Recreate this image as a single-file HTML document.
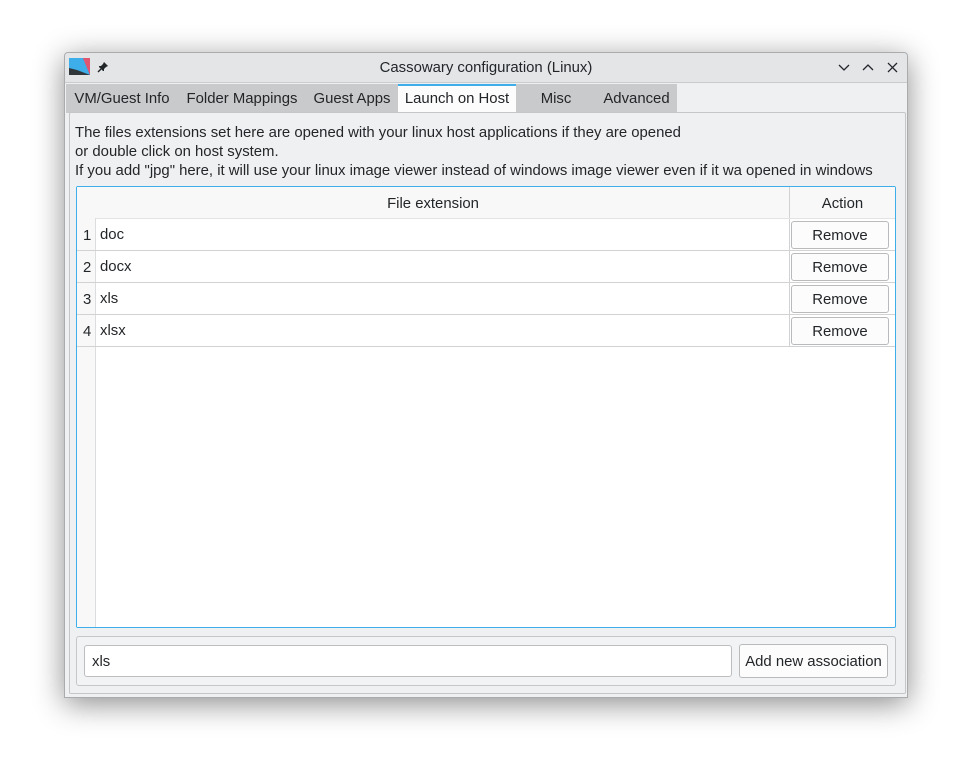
<!DOCTYPE html>
<html><head><style>
*{box-sizing:border-box;margin:0;padding:0}
body{width:972px;height:774px;background:#fff;font-family:"Liberation Sans",sans-serif;font-size:14.9px;color:#232629;position:relative;overflow:hidden}
.abs{position:absolute}
.win{left:64px;top:52px;width:844px;height:646px;background:#eff0f1;border:1px solid #a9abad;border-radius:4px 4px 0 0;box-shadow:0 6px 30px rgba(0,0,0,.45)}
.title{left:0;top:0;width:842px;height:30px;background:#e3e5e7;border-bottom:1px solid #c9cbcd;border-radius:4px 4px 0 0}
.tab{top:31px;height:29px;background:#c9cacb;line-height:30px;text-align:center}
.btn{background:#fcfcfc;border:1px solid #b8babc;border-radius:3px;text-align:center}
.hl{height:1px;background:#d0d2d4}
.n{left:6px}
</style></head><body>
<div class="abs win">
 <div class="abs title">
  <svg class="abs" style="left:4px;top:5px" width="21" height="18" viewBox="0 0 21 18"><rect width="21" height="17" fill="#d14f8a"/><polygon points="0,0 14,0 21,17 0,17" fill="#3daee9"/><polygon points="14,0 21,0 21,17" fill="#e05570"/><polygon points="0,10 0,17 21,17 8,12" fill="#31363b"/></svg>
  <svg class="abs" style="left:32px;top:8px" width="12" height="12" viewBox="0 0 12 12"><path d="M7 1l4 4-2 1-2 2 0 2-1 0-4-4 0-1 2 0 2-2z" fill="#232629"/><path d="M4 8L1 11" stroke="#232629" stroke-width="1.4"/></svg>
  <div class="abs" style="left:0;width:842px;top:7px;text-align:center">Cassowary configuration (Linux)</div>
  <svg class="abs" style="left:773px;top:9px" width="60" height="12" viewBox="0 0 60 12" fill="none" stroke="#232629" stroke-width="1.3"><path d="M1 3l5 5 5-5"/><path d="M25 8l5-5 5 5"/><path d="M50 1l9 9M59 1l-9 9"/></svg>
 </div>
 <div class="abs tab" style="left:1px;width:112px">VM/Guest Info</div>
 <div class="abs tab" style="left:113px;width:128px">Folder Mappings</div>
 <div class="abs tab" style="left:241px;width:92px">Guest Apps</div>
 <div class="abs tab" style="left:333px;width:118px;background:#fcfcfc;border-top:2px solid #3daee9;line-height:27px">Launch on Host</div>
 <div class="abs tab" style="left:451px;width:80px">Misc</div>
 <div class="abs tab" style="left:531px;width:81px">Advanced</div>
 <div class="abs" style="left:4px;top:59px;width:837px;height:582px;border:1px solid #c4c6c8;background:#eff0f1;border-radius:2px"></div>
 <div class="abs" style="left:10px;top:71px;line-height:19px;white-space:nowrap">The files extensions set here are opened with your linux host applications if they are opened<br>or double click on host system.<br>If you add "jpg" here, it will use your linux image viewer instead of windows image viewer even if it wa opened in windows</div>
 <div class="abs" style="left:11px;top:133px;width:820px;height:442px;border:1px solid #3daee9;background:#fff;border-radius:2px">
  <div class="abs" style="left:0;top:0;width:818px;height:31px;background:#f8f8f8"></div>
  <div class="abs" style="left:0;top:31px;width:19px;height:409px;background:#f8f8f8;border-right:1px solid #dcdddf"></div>
  <div class="abs" style="left:712px;top:0;width:1px;height:159px;background:#d0d2d4"></div>
  <div class="abs" style="left:0;top:9px;width:712px;text-align:center">File extension</div>
  <div class="abs" style="left:713px;top:9px;width:105px;text-align:center">Action</div>
  <div class="abs hl" style="left:19px;top:31px;width:799px;background:#e2e3e5"></div>
  <div class="abs hl" style="left:0;top:63px;width:818px"></div>
  <div class="abs hl" style="left:0;top:95px;width:818px"></div>
  <div class="abs hl" style="left:0;top:127px;width:818px"></div>
  <div class="abs hl" style="left:0;top:159px;width:818px"></div>
  <div class="abs n" style="top:41px">1</div>
  <div class="abs n" style="top:73px">2</div>
  <div class="abs n" style="top:105px">3</div>
  <div class="abs n" style="top:137px">4</div>
  <div class="abs" style="left:23px;top:40px">doc</div>
  <div class="abs" style="left:23px;top:72px">docx</div>
  <div class="abs" style="left:23px;top:104px">xls</div>
  <div class="abs" style="left:23px;top:136px">xlsx</div>
  <div class="abs btn" style="left:714px;top:34px;width:98px;height:28px;line-height:28px">Remove</div>
  <div class="abs btn" style="left:714px;top:66px;width:98px;height:28px;line-height:28px">Remove</div>
  <div class="abs btn" style="left:714px;top:98px;width:98px;height:28px;line-height:28px">Remove</div>
  <div class="abs btn" style="left:714px;top:130px;width:98px;height:28px;line-height:28px">Remove</div>
 </div>
 <div class="abs" style="left:11px;top:583px;width:820px;height:50px;border:1px solid #c4c6c8;border-radius:3px;background:#f2f3f4"></div>
 <div class="abs" style="left:19px;top:592px;width:648px;height:32px;border:1px solid #bcbec0;border-radius:3px;background:#fff;padding-left:7px;line-height:32px">xls</div>
 <div class="abs btn" style="left:674px;top:591px;width:149px;height:34px;line-height:34px;white-space:nowrap">Add new association</div>
</div>
</body></html>
